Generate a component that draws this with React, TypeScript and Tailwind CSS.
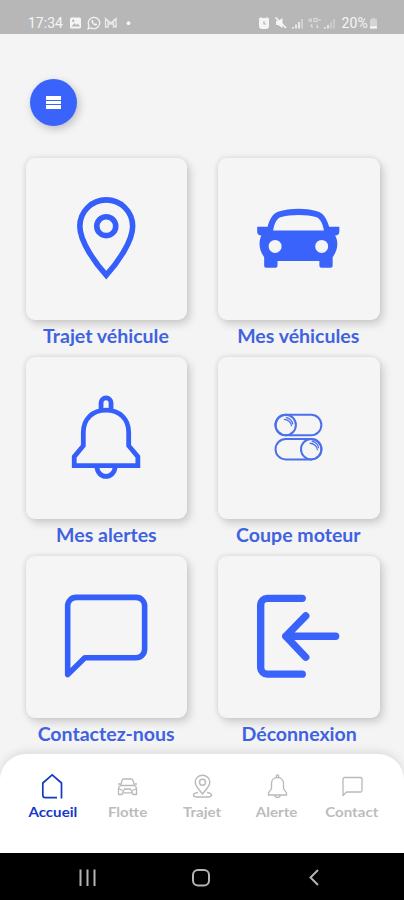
import React from 'react';

const PinIcon = () => (
  <svg viewBox="0 0 162 162" className="size-full" fill="none" stroke="#355ffa" strokeWidth="5.6">
    <path d="M80.5 117.6C70 106 54 84 54 68.5a26.5 26.5 0 0 1 53 0C107 84 91 106 80.5 117.6z" />
    <circle cx="80.5" cy="68.4" r="9.5" />
  </svg>
);

const CarIcon = () => (
  <svg viewBox="0 0 162 162" className="size-full" fill="#3a63fb">
    <path
      fillRule="evenodd"
      d="M39.3 69H49.7C52 61 55 56 60 54C72 50 90 50 101 54C106 56 109 61 111.5 69H121.7V74Q121.7 77.7 117.5 77.7C121 84 120.5 92 115 99.5V108Q115 110 113 110H103.7Q101.7 110 101.7 108V103.3H59.7V108Q59.7 110 57.7 110H48.3Q46.3 110 46.3 108V99.5C41 92 40.5 84 43.5 77.7Q39.3 77.7 39.3 74zM55.3 72.7H106.3C105 66 103 61.5 99 59.5C89 56.5 73 56.5 62.5 59.5C58.5 61.5 56.5 66 55.3 72.7zM57.3 82.2a6.5 6.5 0 1 0 0 13a6.5 6.5 0 0 0 0-13zM104 82.2a6.5 6.5 0 1 0 0 13a6.5 6.5 0 0 0 0-13z"
    />
  </svg>
);

const BellIcon = () => (
  <svg viewBox="0 0 162 162" className="size-full" fill="none" stroke="#355ffa" strokeWidth="4.8">
    <path d="M75.3 53.5V46a5 5 0 0 1 10 0V53.5" />
    <path d="M57.5 89V75.5C57.5 62 67 53.2 80.3 53.2S103 62 103 75.5V89L112.2 100V109H48.4V100z" />
    <path d="M71 110C71.5 116 75.5 119.8 80.2 119.8S89 116 89.5 110" />
  </svg>
);

const SwitchIcon = () => (
  <svg viewBox="0 0 162 162" className="size-full" fill="none" stroke="#4c70ec" strokeWidth="2">
    <rect x="57.7" y="58" width="46" height="20.5" rx="10.25" />
    <circle cx="67.9" cy="68.25" r="10.25" />
    <path d="M66 62.5c4 0 7.5 3 7.8 7M68 60.5c4 1 6.5 3.5 7 7" strokeWidth="1.3" />
    <rect x="57.7" y="82.2" width="46" height="20.5" rx="10.25" />
    <circle cx="93.5" cy="92.45" r="10.25" />
    <path d="M92 86.5c4 0 7.5 3 7.8 7M94 84.5c4 1 6.5 3.5 7 7" strokeWidth="1.3" />
  </svg>
);

const ChatIcon = () => (
  <svg viewBox="0 0 162 162" className="size-full" fill="none" stroke="#355ffa" strokeWidth="5.6" strokeLinejoin="round">
    <path d="M41.8 119V50a8.5 8.5 0 0 1 8.5-8.5H110.5a8.5 8.5 0 0 1 8.5 8.5V93.5a8.5 8.5 0 0 1-8.5 8.5H59z" />
  </svg>
);

const ExitIcon = () => (
  <svg viewBox="0 0 162 162" className="size-full" fill="none" stroke="#3a63fb" strokeWidth="7.4" strokeLinecap="round" strokeLinejoin="round">
    <path d="M84.5 42.5H49.5a6.7 6.7 0 0 0-6.7 6.7V111.8a6.7 6.7 0 0 0 6.7 6.7H84.5" />
    <path d="M118 80.5H68M88 60L68 80.5L88 101.5" />
    <path d="M71 76L76 80.5L71 85z" strokeWidth="3" fill="#3a63fb" />
  </svg>
);

const tiles = [
  { label: 'Trajet véhicule', Icon: PinIcon },
  { label: 'Mes véhicules', Icon: CarIcon },
  { label: 'Mes alertes', Icon: BellIcon },
  { label: 'Coupe moteur', Icon: SwitchIcon },
  { label: 'Contactez-nous', Icon: ChatIcon },
  { label: 'Déconnexion', Icon: ExitIcon },
];

const HomeTab = () => (
  <svg width="26" height="26" viewBox="0 0 26 26" fill="none" stroke="#1538c8" strokeWidth="1.7">
    <path d="M18 24.7H6.5Q3.8 24.7 3.8 22V10L13.2 1.8L22.5 10V25.5" />
  </svg>
);

const CarTab = () => (
  <svg width="26" height="26" viewBox="0 0 26 26" fill="none" stroke="#b9b9b9" strokeWidth="1.3" strokeLinejoin="round">
    <path d="M6.5 12.5L8 7.5Q8.5 6 10 6H17Q18.500 6 19 7.5L20.500 12.500z" />
    <path d="M6.500 12.500Q4.500 13.500 4.500 15.500V21.500H8L9 19.800H18L19 21.500H22.500V15.500Q22.500 13.500 20.500 12.500M4 11H6.500M23 11H20.500M4.500 15.500L8.500 17.500M22.500 15.500L18.500 17.500M8.500 19.500L10.500 16H16.500L18.500 19.500" />
  </svg>
);

const PinTab = () => (
  <svg width="26" height="26" viewBox="0 0 26 26" fill="none" stroke="#b9b9b9" strokeWidth="1.4" strokeLinejoin="round">
    <path d="M13.5 21C11 17.500 6.200 13.500 6.200 9.300a7.300 7 0 0 1 14.600 0C20.800 13.500 16 17.500 13.500 21z" />
    <circle cx="13.500" cy="9.200" r="3" />
    <path d="M9 19.500C6 20 4.500 21 4.500 22Q4.500 24 8 24H19Q22.500 24 22.500 22C22.500 21 21 20 18 19.500" />
  </svg>
);

const BellTab = () => (
  <svg width="26" height="26" viewBox="0 0 26 26" fill="none" stroke="#b9b9b9" strokeWidth="1.3">
    <path d="M12.300 4.500V3a1.200 1.200 0 0 1 2.400 0V4.500M7.500 15.500V10.500C7.500 7 10 4.500 13.500 4.500S19.500 7 19.500 10.500V15.500L22.500 20V22H4.500V20zM10.800 22a2.700 2.500 0 0 0 5.400 0" />
  </svg>
);

const ChatTab = () => (
  <svg width="26" height="26" viewBox="0 0 26 26" fill="none" stroke="#b9b9b9" strokeWidth="1.3" strokeLinejoin="round">
    <path d="M4 22.500V6Q4 4.500 5.500 4.500H21.500Q23 4.500 23 6V17.500Q23 19 21.500 19H7.500z" />
  </svg>
);

const tabs = [
  { label: 'Accueil', Icon: HomeTab, style: 'text-[#1538c8]' },
  { label: 'Flotte', Icon: CarTab, style: 'text-[#bcbcbc]' },
  { label: 'Trajet', Icon: PinTab, style: 'text-[#bcbcbc]' },
  { label: 'Alerte', Icon: BellTab, style: 'text-[#bcbcbc]' },
  { label: 'Contact', Icon: ChatTab, style: 'text-[#bcbcbc]' },
];

const StatusBar: React.FC = () => (
  <div className="h-[34px] shrink-0 bg-[#b7b7b7] pl-7 pr-[25px] pt-3 flex items-center justify-between text-[#f5f5f5] font-[Roboto,sans-serif] text-[14px] leading-[22px]">
    <div className="flex items-center">
      <span className="w-[36px]">17:34</span>
      <svg width="70" height="14" viewBox="0 0 70 14" className="ml-[5px]">
        <rect x="1" y="1.5" width="11" height="11" rx="1.5" fill="#f5f5f5" />
        <path d="M2.5 10.5L5.5 7L7.5 9L9 7.5L11 10.5z" fill="#b7b7b7" />
        <circle cx="4.2" cy="4.8" r="1.2" fill="#b7b7b7" />
        <path d="M19 12.8L20 9.8a5.7 5.7 0 1 1 2.2 2.2z" fill="none" stroke="#f5f5f5" strokeWidth="1.2" />
        <path d="M22.5 4.5c-.5 2.5 2.5 5.5 5 5l.8-1.5-2-.8-.8.7-1.5-1.7.5-.8-.7-1.5z" fill="#f5f5f5" />
        <path d="M36.500 12V2.500L41.800 7.500L47 2.500V12M39 12V5M44.500 12V5M37 3L47 11M46.500 3L37 11" fill="none" stroke="#e9e9e9" strokeWidth="1.3" />
        <circle cx="59.5" cy="7.2" r="1.9" fill="#f5f5f5" />
      </svg>
    </div>
    <div className="flex items-center">
      <svg width="82" height="14" viewBox="0 0 82 14" fill="none" stroke="#f5f5f5" className="-translate-x-0.5">
        <rect x="1.5" y="2.5" width="9" height="10" rx="2" fill="#f5f5f5" />
        <path d="M1 3.5L3.5 1.5M11 3.5L8.5 1.5" strokeWidth="1.5" />
        <path d="M6 5V8H8" stroke="#b7b7b7" strokeWidth="1.2" />
        <path d="M18 5H20L24.5 2V12L20 9H18z" fill="#f5f5f5" stroke="none" />
        <path d="M17.5 1.5L28 12" strokeWidth="1.7" />
        <path d="M35 12.5V11M38 12.5V8.5M41 12.5V6" strokeWidth="1.6" />
        <path d="M44 12.5V3" stroke="#d6d6d6" strokeWidth="1.6" />
        <path d="M51 2.5V5H54M53 2V6M56 2.5H59V5.5H56zM60 4H63M54 8.5V12M52.5 10L54 8.5M59 8.5V12M60.5 10.5L59 12" stroke="#dddddd" strokeWidth="1.1" />
        <path d="M67 12.5V11M70 12.5V9" strokeWidth="1.5" />
        <path d="M73 12.5V6M76 12.5V3" stroke="#cfcfcf" strokeWidth="1.6" />
      </svg>
      <span className="-ml-px tracking-[0.2px]">20%</span>
      <svg width="11" height="14" viewBox="0 0 11 14">
        <path d="M4 2H7V3.2H9V12.5H2V3.2H4z" fill="#d4d4d4" />
        <path d="M2 10.3H9V12.5H2z" fill="#f7f7f7" />
      </svg>
    </div>
  </div>
);

export default function App() {
  return (
    <div className="w-[404px] h-[900px] flex flex-col overflow-hidden bg-[#f4f4f4] font-[Lato,sans-serif]">
      <StatusBar />

      <header className="h-[124px] shrink-0 pt-[45px] pl-[30px]">
        <button
          aria-label="Menu"
          className="size-[47px] rounded-full bg-[#3a63fb] flex flex-col items-center justify-center gap-px shadow-[2px_3px_8px_rgba(0,0,0,0.22)]"
        >
          <span className="w-[15px] h-[3.5px] bg-white" />
          <span className="w-[15px] h-[3.5px] bg-white" />
          <span className="w-[15px] h-[3.5px] bg-white" />
        </button>
      </header>

      <main className="flex-1 min-h-0 grid grid-cols-[161.5px_161.5px] auto-rows-[199px] content-start gap-x-[31px] pl-[25.5px]">
        {tiles.map(({ label, Icon }) => (
          <div key={label} className="flex flex-col items-center">
            <div className="size-[161.5px] shrink-0 rounded-[9px] bg-[#f5f5f5] shadow-[3px_4px_9px_rgba(0,0,0,0.17),-1px_-1px_5px_rgba(0,0,0,0.08)]">
              <Icon />
            </div>
            <span className="mt-[4.5px] text-[18px] leading-[24px] font-bold whitespace-nowrap text-[#3f63e0] scale-x-[1.085]">{label}</span>
          </div>
        ))}
      </main>

      <nav className="h-[99px] shrink-0 rounded-t-[26px] bg-white px-[15px] pt-[19px] grid grid-cols-5 shadow-[0_-3px_8px_rgba(0,0,0,0.09)]">
        {tabs.map(({ label, Icon, style }) => (
          <div key={label} className={`flex flex-col items-center text-[13.5px] leading-[18px] font-bold ${style}`}>
            <Icon />
            <span className="mt-[4px] scale-x-[1.12]">{label}</span>
          </div>
        ))}
      </nav>

      <footer className="h-[47px] shrink-0 bg-black">
        <svg width="404" height="47" viewBox="0 0 404 47" fill="none" stroke="#b4b4b4" strokeWidth="2">
          <path d="M80.5 16.5V33M87.5 16.5V33M94.5 16.5V33" />
          <rect x="193" y="17" width="16" height="15.5" rx="5" />
          <path d="M318 17L310.5 24.5L318 32" />
        </svg>
      </footer>
    </div>
  );
}
